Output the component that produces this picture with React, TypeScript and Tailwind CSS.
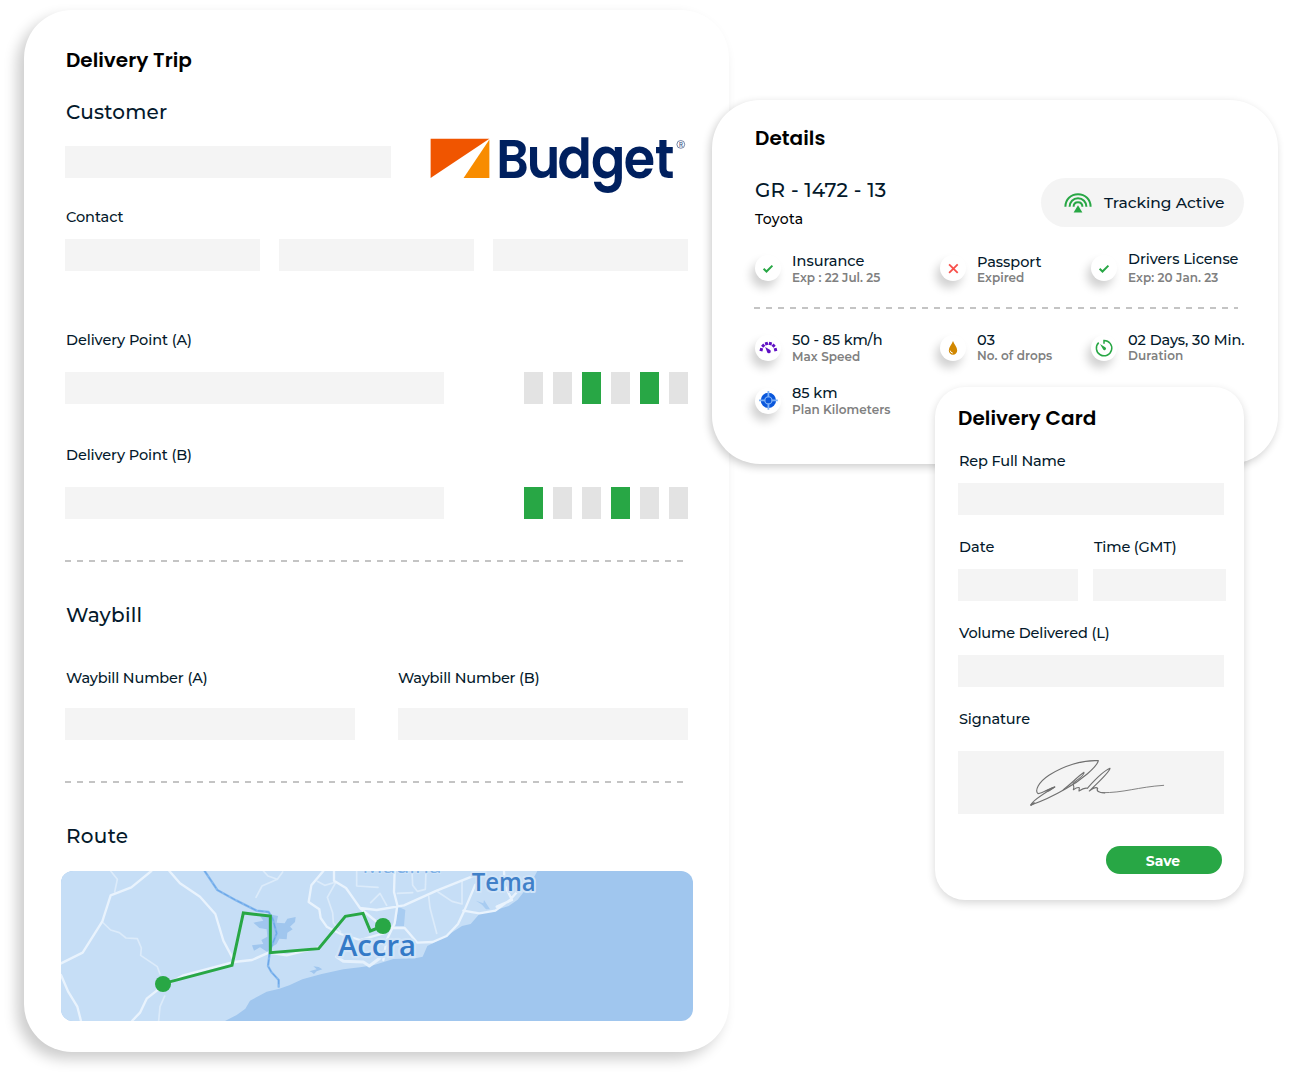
import { useLayoutEffect, useRef, type ReactNode } from "react";
import clsx from "clsx";

/* One line of text whose tracking is adjusted so that it spans `w` pixels. */
function Fit({ w, children, className }: { w: number; children: string; className?: string }) {
  const ref = useRef<HTMLSpanElement>(null);
  useLayoutEffect(() => {
    const el = ref.current;
    if (!el) return;
    el.style.letterSpacing = "0px";
    const natural = el.getBoundingClientRect().width;
    el.style.letterSpacing = `${(w + 0.4 - natural) / children.length}px`;
  }, [w, children]);
  return (
    <span ref={ref} className={clsx("inline-block whitespace-nowrap", className)}>
      {children}
    </span>
  );
}

function Title({ w, children, className }: { w: number; children: string; className?: string }) {
  return (
    <h2
      className={clsx(
        "h-[30px] font-['Poppins','Montserrat','Inter',sans-serif] text-[20px] leading-[30px] font-semibold text-black",
        className,
      )}
    >
      <Fit w={w}>{children}</Fit>
    </h2>
  );
}

function Heading({ w, children, className }: { w: number; children: string; className?: string }) {
  return (
    <h3 className={clsx("h-[30px] text-[20px] leading-[30px] font-medium text-[#04192b]", className)}>
      <Fit w={w}>{children}</Fit>
    </h3>
  );
}

function Label({ w, children, className }: { w: number; children: string; className?: string }) {
  return (
    <div className={clsx("h-5 text-[14.5px] leading-5 font-medium text-[#04192b]", className)}>
      <Fit w={w}>{children}</Fit>
    </div>
  );
}

function Field({ className }: { className?: string }) {
  return <div className={clsx("h-8 bg-[#f4f4f4]", className)} />;
}

function Dashes({ className }: { className?: string }) {
  return (
    <div
      className={clsx(
        "h-[2px] bg-[repeating-linear-gradient(90deg,#c4c4c4_0_6px,transparent_6px_12px)]",
        className,
      )}
    />
  );
}

function Bars({ on }: { on: number[] }) {
  return (
    <div className="flex gap-[10px]">
      {[0, 1, 2, 3, 4, 5].map((i) => (
        <div key={i} className={clsx("h-8 w-[19px]", on.includes(i) ? "bg-[#28a745]" : "bg-[#e3e3e3]")} />
      ))}
    </div>
  );
}

function BudgetLogo() {
  return (
    <svg width="280" height="80" viewBox="0 0 280 80" className="-mt-[21px] -mb-[27px] ml-[29px] shrink-0 overflow-visible">
      <path d="M10.6 13.7H69.4L10.6 53Z" fill="#f05500" />
      <path d="M69.4 14.5V53H43.6Z" fill="#f88c00" />
      <text
        transform="scale(.93 1)"
        x="82 114.8 147.8 183.8 219 252.4"
        y="52.8"
        fontFamily="Poppins, Montserrat, Inter, sans-serif"
        fontSize="54.5"
        fontWeight="600"
        fill="#00205f"
      >
        Budget
      </text>
      <circle cx="260.8" cy="19.4" r="3.9" fill="none" stroke="#3c5281" strokeWidth="0.7" />
      <text x="258.9" y="21.6" fontFamily="Inter, sans-serif" fontSize="6" fontWeight="500" fill="#3c5281">
        R
      </text>
    </svg>
  );
}

function RouteMap() {
  return (
    <svg width="632" height="150" viewBox="33 33 1896 450" className="mt-5 -ml-1 block rounded-[12px]">
      <rect x="33" y="33" width="1896" height="450" fill="#a0c6ee" />
      <path
        d="M33 33H1462L1454 48L1424 92L1403 119L1376 138L1330 152L1290 160L1262 192L1236 198L1208 216L1185 230L1160 244L1132 258L1118 290L1096 295L1030 297L970 316L930 322L880 328L815 342L757 358L718 376L688 386L650 395L600 422L586 446L560 465L525 483H33Z"
        fill="#c6def6"
      />
      <path
        d="M628 165L655 162L684 168L680 188L704 190L712 176L737 171L735 186L720 200L728 208L712 218L710 238L688 236L680 252L664 262L652 276L630 262L612 272L606 256L640 252L634 240L652 230L650 208L628 204L610 188L640 182Z"
        fill="#a0c6ee"
      />
      <path d="M778 334L800 328L790 319L806 321L817 328L800 334L792 342L784 336Z" fill="#a0c6ee" />
      <path d="M1278 122L1300 130L1302 120L1320 148L1308 148L1296 134Z M1045 140L1066 150L1062 198L1036 198Z" fill="#a8ccf1" />
      <g fill="none" strokeLinejoin="round" strokeLinecap="round">
        <g stroke="#dcebfa" strokeWidth="5">
          <path d="M182 33L202 58L194 96M157 186L182 210L208 218L228 234L262 236L274 264L272 286L322 320L330 342M344 408L330 440L326 483" />
          <path d="M640 33L654 48L682 58L698 36M682 58L636 78L618 112M802 64L824 76L858 66L832 112L848 158L850 188L872 216" />
          <path d="M962 128L990 100L1010 136M1086 33L1088 76L1102 94L1126 88L1128 33M1042 100L1088 98M1164 96L1206 124L1236 132V62M1136 108L1140 144L1160 220M920 33V78L984 82" />
        </g>
        <g stroke="#e9f3fd" strokeWidth="7">
          <path d="M33 310L98 278L157 184L182 106L244 82L304 33M358 33L390 70L450 110L496 162L520 242L552 302" />
          <path d="M33 345L54 394L82 440L93 483M246 483L270 458L290 416L328 386L400 346L552 306L606 300L656 278L710 286L806 262" />
          <path d="M820 33L784 76L776 126L808 148L812 174L830 200L872 222L930 240L1000 220" />
          <path d="M852 33V62L888 84L912 118L930 144L966 174L1004 204M930 144L980 150L1062 136L1160 92L1280 44M1034 33L1032 96L1042 136L1034 190L1010 240L1000 300M1020 204H1064L1102 248L1148 246L1190 228L1224 192L1242 154L1276 74M1240 152L1288 160L1336 152L1382 118L1404 92M1340 140L1386 120L1364 76L1362 33" />
        </g>
        <path d="M860 290L880 304L940 306L958 318L990 294" stroke="#e4f0fc" strokeWidth="9" />
        <path d="M464 33L502 90L560 122L620 152L656 156L668 176L680 220L660 270L654 318L664 336L686 360V380" stroke="#86b9ee" strokeWidth="7" />
        <path d="M464 33L502 90L560 122L620 152L656 156L668 176L680 220L660 270L654 318L664 336L686 360V380" stroke="#69a5e8" strokeWidth="3" strokeDasharray="14 9" />
      </g>
      <g
        fontFamily="'Open Sans', 'Noto Sans', sans-serif"
        strokeLinejoin="round"
        paintOrder="stroke"
        stroke="#d0e4f8"
      >
        <text x="937" y="38" fontSize="66" fontWeight="500" fill="#7fb1e6" strokeWidth="6" textLength="238" lengthAdjust="spacingAndGlyphs">
          Madina
        </text>
        <text x="1265" y="92" fontSize="75" fontWeight="600" fill="#4080c8" strokeWidth="12" textLength="192" lengthAdjust="spacingAndGlyphs">
          Tema
        </text>
        <text x="864" y="289" fontSize="89" fontWeight="600" fill="#347ac7" strokeWidth="14" textLength="234" lengthAdjust="spacingAndGlyphs">
          Accra
        </text>
      </g>
      <path
        d="M339 371L546 316L580 159L661 168V278L806 266L886 169L939 160L961 213L999 198"
        fill="none"
        stroke="#28a745"
        strokeWidth="9"
      />
      <circle cx="339" cy="372" r="24" fill="#28a745" />
      <circle cx="999" cy="198" r="24" fill="#28a745" />
    </svg>
  );
}

function TrackingIcon() {
  return (
    <svg width="28" height="20" viewBox="0 0 28 20" fill="none" stroke="#28a745" strokeWidth="2" className="-ml-[.5px]">
      <path d="M1.4 13.8C1.4 6.5 6.8 1.3 14 1.3S26.6 6.5 26.6 13.8" />
      <path d="M5.6 13.8C5.6 8.8 9.2 5.3 14 5.3S22.4 8.8 22.4 13.8" />
      <path d="M9.6 13.8C9.6 11 11.3 9.2 14 9.2S18.4 11 18.4 13.8" />
      <path d="M14 12.3L18.4 19.5H9.6Z" fill="#28a745" stroke="none" />
    </svg>
  );
}

const icons: Record<string, ReactNode> = {
  check: <path d="M-4.4 .8L-1.5 3.5L4.4 -2.4" fill="none" stroke="#28a745" strokeWidth="2" />,
  cross: <path d="M-3.9 -3.7L4.7 4.9M4.7 -3.7L-3.9 4.9" fill="none" stroke="#f8504b" strokeWidth="1.8" />,
  gauge: (
    <g transform="translate(.4 .6)" fill="#5f0fc4">
      {[
        [-7.1, 1, -75],
        [-5.2, -2.9, -45],
        [-1.9, -5, -15],
        [1.9, -5, 15],
        [5.2, -2.9, 45],
        [7.1, 1, 75],
      ].map(([x, y, a]) => (
        <rect key={x} x="-1.5" y="-1.5" width="3" height="3" transform={`translate(${x} ${y}) rotate(${a})`} />
      ))}
      <path d="M-3.2 -1.7L1 1A1.9 1.9 0 1 1 -1.4 3.2Z" />
    </g>
  ),
  drop: (
    <g transform="translate(0 .6)">
      <path d="M0 -7.5C1.2 -4.2 4.2 -1.5 4.2 1.9A4.2 4.2 0 0 1 -4.2 1.9C-4.2 -1.5 -1.2 -4.2 0 -7.5Z" fill="#d18700" />
      <path d="M-2.8 2A3 3 0 0 0 -.2 4.5" fill="none" stroke="#fff" strokeWidth="1" />
    </g>
  ),
  target: (
    <g transform="translate(.4 -.6)">
      <circle r="7.7" fill="#0b58dc" />
      <circle r="3.6" fill="none" stroke="#8fbdf8" strokeWidth="1.1" />
      <path d="M-9.4 0H-3.2M3.2 0H9.4M0 -9.4V-3.2M0 3.2V9.4" stroke="#7db1f7" strokeWidth="1.8" />
    </g>
  ),
  timer: (
    <g fill="none" stroke="#28a745" strokeWidth="1.5">
      <path d="M0 -4.3V-7.6A7.7 7.7 0 1 1 -5.3 -5.4" />
      <path d="M-4 -4.1L1.6 -.6A1.5 1.5 0 0 1 -.8 1.6Z" fill="#28a745" stroke="none" />
    </g>
  ),
};

type ItemProps = {
  icon: string;
  title: string;
  tw: number;
  sub: string;
  sw: number;
  text?: string;
  subClass?: string;
};

function Item({ icon, title, tw, sub, sw, text, subClass }: ItemProps) {
  return (
    <div className="flex gap-[11px]">
      <div className="mt-[5px] size-[26px] shrink-0 rounded-full bg-white shadow-[-4px_7px_10px_rgba(0,0,0,0.18)]">
        <svg width="26" height="26" viewBox="-13 -13 26 26" className="block">
          {icons[icon]}
        </svg>
      </div>
      <div className={text}>
        <div className="h-5 text-[14.5px] leading-5 font-medium text-[#04192b]">
          <Fit w={tw}>{title}</Fit>
        </div>
        <div className={clsx("h-[14px] text-[12px] leading-[14px] font-semibold text-[#808080]", subClass)}>
          <Fit w={sw}>{sub}</Fit>
        </div>
      </div>
    </div>
  );
}

function TripCard() {
  return (
    <section className="h-[1042px] w-[705px] shrink-0 rounded-[48px] bg-white pt-[35px] pl-[41px] shadow-[-7px_7px_14px_rgba(0,0,0,0.2)]">
      <Title w={125.5} className="ml-px">Delivery Trip</Title>
      <Heading w={101} className="mt-[22px] ml-px">Customer</Heading>
      <div className="mt-[19px] flex h-8">
        <Field className="w-[326px]" />
        <BudgetLogo />
      </div>
      <Label w={57} className="mt-[29px] ml-px">Contact</Label>
      <div className="mt-3 flex gap-[19px]">
        <Field className="w-[195px]" />
        <Field className="w-[195px]" />
        <Field className="w-[195px]" />
      </div>
      <Label w={125.5} className="mt-[59px] ml-px">Delivery Point (A)</Label>
      <div className="mt-[22px] flex gap-20">
        <Field className="w-[379px]" />
        <Bars on={[2, 4]} />
      </div>
      <Label w={125.5} className="mt-[41px] ml-px">Delivery Point (B)</Label>
      <div className="mt-[22px] flex gap-20">
        <Field className="w-[379px]" />
        <Bars on={[0, 3]} />
      </div>
      <Dashes className="mt-[41px] w-[619px]" />
      <Heading w={76} className="mt-[38px] ml-px">Waybill</Heading>
      <div className="mt-[38px] flex gap-[43px]">
        <div className="w-[290px]">
          <Label w={141} className="ml-px">Waybill Number (A)</Label>
          <Field className="mt-5" />
        </div>
        <div className="w-[290px]">
          <Label w={141}>Waybill Number (B)</Label>
          <Field className="mt-5" />
        </div>
      </div>
      <Dashes className="mt-[41px] w-[619px]" />
      <Heading w={62} className="mt-[38px] ml-px">Route</Heading>
      <RouteMap />
    </section>
  );
}

function DetailsCard() {
  return (
    <section className="h-[364px] w-[566px] rounded-[48px] bg-white pt-[23px] pl-[42px] shadow-[-2px_3px_9px_rgba(0,0,0,0.2)]">
      <Title w={70} className="ml-px">Details</Title>
      <div className="mt-[22px] flex justify-between pr-[34px] pl-px">
        <div>
          <Heading w={131}>GR - 1472 - 13</Heading>
          <div className="mt-1 h-5 text-[14px] leading-5 font-medium text-black">
            <Fit w={48}>Toyota</Fit>
          </div>
        </div>
        <div className="mt-[3px] flex h-[49px] w-[203px] items-center rounded-full bg-[#f4f4f4] pl-[23px]">
          <TrackingIcon />
          <div className="ml-[12.5px] text-[15.5px] leading-5 font-medium text-[#04192b]">
            <Fit w={120}>Tracking Active</Fit>
          </div>
        </div>
      </div>
      <div className="mt-[21px] ml-px grid h-[57px] grid-cols-[185px_151px_160px]">
        <Item icon="check" title="Insurance" tw={72} sub="Exp : 22 Jul. 25" sw={88} text="pt-px" />
        <Item icon="cross" title="Passport" tw={64} sub="Expired" sw={47} text="pt-[2px]" subClass="-mt-px" />
        <Item icon="check" title="Drivers License" tw={110} sub="Exp: 20 Jan. 23" sw={90} text="-mt-px" subClass="mt-[2px]" />
      </div>
      <Dashes className="w-[484px]" />
      <div className="mt-[21px] ml-px grid h-[53px] grid-cols-[185px_151px_160px]">
        <Item icon="gauge" title="50 - 85 km/h" tw={90} sub="Max Speed" sw={68} />
        <Item icon="drop" title="03" tw={18} sub="No. of drops" sw={75} subClass="-mt-px" />
        <Item icon="timer" title="02 Days, 30 Min." tw={116} sub="Duration" sw={55} subClass="-mt-px" />
      </div>
      <div className="ml-px">
        <Item icon="target" title="85 km" tw={45} sub="Plan Kilometers" sw={98} />
      </div>
    </section>
  );
}

function DeliveryCard() {
  return (
    <section className="relative -mt-[77px] ml-[223px] h-[513px] w-[309px] rounded-[30px] bg-white pt-4 pl-[23px] shadow-[0_3px_8px_rgba(0,0,0,0.16)]">
      <Title w={138}>Delivery Card</Title>
      <Label w={106} className="mt-[18px] ml-px">Rep Full Name</Label>
      <Field className="mt-3 w-[266px]" />
      <div className="mt-[22px] flex gap-[15px]">
        <div className="w-[120px]">
          <Label w={35} className="ml-px">Date</Label>
          <Field className="mt-3" />
        </div>
        <div className="w-[133px]">
          <Label w={82} className="ml-px">Time (GMT)</Label>
          <Field className="mt-3" />
        </div>
      </div>
      <Label w={150} className="mt-[22px] ml-px">Volume Delivered (L)</Label>
      <Field className="mt-3 w-[266px]" />
      <Label w={70.5} className="mt-[22px] ml-px">Signature</Label>
      <div className="mt-[22px] h-[63px] w-[266px] bg-[#f4f4f4]">
        <svg width="266" height="63" viewBox="-156 18 798 189" fill="none" stroke="#707070" strokeLinecap="round" strokeLinejoin="round">
          <path
            d="M134 126C122 127 102 144 84 146C74 138 84 112 118 90C158 64 216 44 265 47C262 64 214 106 166 132C128 154 92 170 63 180C64 170 104 144 134 126"
            strokeWidth="3.4"
          />
          <path
            d="M160 134C184 116 202 96 222 82C226 88 206 102 190 114C186 122 196 120 190 134C196 130 202 126 208 128L207 138C216 132 226 128 232 130C250 110 276 80 300 70C300 80 270 108 238 138C246 132 258 124 263 130C258 138 266 143 284 144"
            strokeWidth="3.4"
          />
          <path d="M108 138L134 126L116 138" strokeWidth="4" />
          <path d="M63 180L72 174" strokeWidth="5" />
          <path d="M276 143C340 144 384 126 461 121" strokeWidth="2.6" />
        </svg>
      </div>
      <button className="mt-8 ml-[148px] block h-7 w-[116px] rounded-full bg-[#28a745] pt-px pr-[2px] text-[14px] leading-7 font-bold text-white">
        <Fit w={34}>Save</Fit>
      </button>
    </section>
  );
}

export default function App() {
  return (
    <main className="flex h-[1078px] w-[1293px] overflow-hidden bg-white pt-[10px] pl-6 font-['Montserrat','Inter',sans-serif]">
      <TripCard />
      <div className="relative mt-[90px] -ml-[17px]">
        <DetailsCard />
        <DeliveryCard />
      </div>
    </main>
  );
}
